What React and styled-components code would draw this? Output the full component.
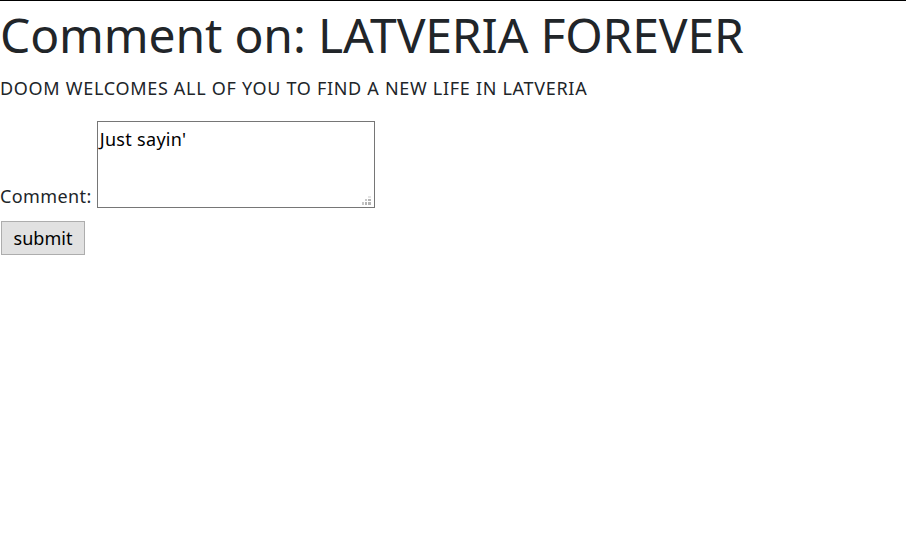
import React from 'react'
import styled, { createGlobalStyle } from 'styled-components'

const GlobalStyle = createGlobalStyle`
  body {
    margin: 0;
    font-family: "Noto Sans", "Open Sans", sans-serif;
    color: #212529;
    background: #ffffff;
  }
`

const Page = styled.div`
  border-top: 1px solid #000000;
  display: flex;
  flex-direction: column;
  align-items: flex-start;
`

const Title = styled.h1`
  margin: 5px 0 0;
  font-size: 48px;
  font-weight: 400;
  line-height: 57px;
  letter-spacing: -0.15px;
`

const Lead = styled.p`
  margin: 13px 0 0;
  font-size: 18px;
  line-height: 24px;
  letter-spacing: 0.7px;
`

const Form = styled.form`
  margin-top: 21px;
  display: flex;
  flex-direction: column;
  align-items: flex-start;
  gap: 13px;
`

const Field = styled.div`
  display: flex;
  align-items: flex-end;
  gap: 5px;
`

const Label = styled.label`
  font-size: 18px;
  line-height: 1;
  letter-spacing: 0.4px;
  padding-bottom: 3px;
`

const Box = styled.div`
  position: relative;
  width: 278px;
  height: 87px;
`

const TextArea = styled.textarea`
  display: block;
  width: 100%;
  height: 100%;
  box-sizing: border-box;
  border: 1px solid #767676;
  padding: 5px 2px 2px;
  font-family: inherit;
  font-size: 18px;
  line-height: 24px;
  letter-spacing: 0.3px;
  color: #000000;
  resize: none;
  outline: none;
`

const Grip = styled.svg`
  position: absolute;
  right: 4px;
  bottom: 3px;
  width: 9px;
  height: 9px;
  pointer-events: none;
`

const Button = styled.button`
  margin-left: 1px;
  width: 84px;
  height: 34px;
  padding: 0;
  font-family: inherit;
  font-size: 18px;
  color: #000000;
  background: #e1e1e1;
  border: 1px solid #adadad;
  border-radius: 0;
`

export default function App () {
  return (
    <Page>
      <GlobalStyle />
      <Title>Comment on: LATVERIA FOREVER</Title>
      <Lead>DOOM WELCOMES ALL OF YOU TO FIND A NEW LIFE IN LATVERIA</Lead>
      <Form onSubmit={e => e.preventDefault()}>
        <Field>
          <Label htmlFor='comment'>Comment:</Label>
          <Box>
            <TextArea id='comment' defaultValue={"Just sayin'"} />
            <Grip viewBox='0 0 9 9'>
              <rect x='6' y='0' width='3' height='2' fill='#e4e4e4' />
              <rect x='3' y='3' width='2' height='2' fill='#c8c8c8' />
              <rect x='6' y='3' width='3' height='2' fill='#b4b4b4' />
              <rect x='0' y='6' width='2' height='3' fill='#c8c8c8' />
              <rect x='3' y='6' width='2' height='3' fill='#b4b4b4' />
              <rect x='6' y='6' width='3' height='3' fill='#b4b4b4' />
            </Grip>
          </Box>
        </Field>
        <Button type='submit'>submit</Button>
      </Form>
    </Page>
  )
}
